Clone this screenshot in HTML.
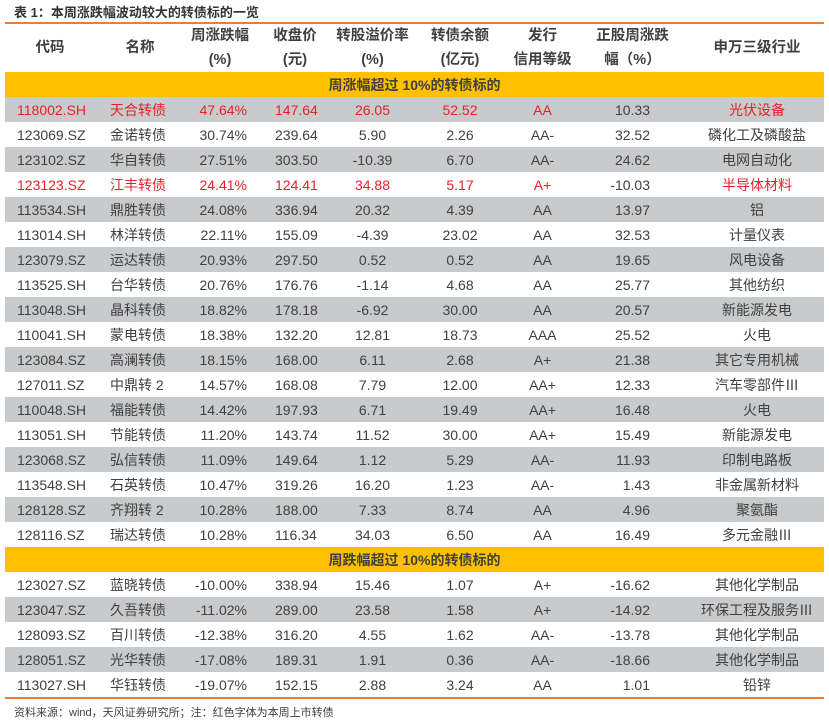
<!DOCTYPE html>
<html><head><meta charset="utf-8"><style>
body{margin:0;width:829px;height:719px;background:#fff;font-family:"Liberation Sans","Noto Sans CJK SC",sans-serif;color:#404040;position:relative;overflow:hidden}
.title{position:absolute;left:14px;top:2px;font-size:13px;font-weight:bold;color:#333}
table{position:absolute;left:5px;top:22px;width:819px;border-collapse:collapse;table-layout:fixed;font-size:14px}
td{padding:0;height:25px;white-space:nowrap;overflow:visible}
thead td{font-weight:bold;text-align:center;vertical-align:middle;color:#404040;line-height:24px;height:48px;font-size:14.5px}
thead tr{border-top:2px solid #ed7d31}
.b td{background:#ffc000;font-weight:bold;color:#404040;text-align:center;height:25px}
.g td{background:#c9cacc}
.r td{color:#e8202a}
td:nth-child(1){text-align:left;padding-left:12px}
td:nth-child(2){text-align:left;padding-left:15px}
td:nth-child(3){text-align:right;padding-right:8px}
td:nth-child(4){text-align:left;padding-left:20px}
td:nth-child(5),td:nth-child(6),td:nth-child(7),td:nth-child(9){text-align:center}
td:nth-child(8){text-align:right;padding-right:40px}
thead td,.b td{padding:0!important;text-align:center!important}
tbody.last tr:last-child{border-bottom:2px solid #ed7d31}
.foot{position:absolute;left:14px;top:704px;font-size:11px;color:#404040}
</style></head><body>
<div class="title">表 1：本周涨跌幅波动较大的转债标的一览</div>
<table>
<colgroup><col style="width:90px"><col style="width:90px"><col style="width:70px"><col style="width:80px"><col style="width:75px"><col style="width:100px"><col style="width:65px"><col style="width:115px"><col style="width:134px"></colgroup>
<thead><tr><td>代码</td><td>名称</td><td>周涨跌幅<br>(%)</td><td>收盘价<br>(元)</td><td>转股溢价率<br>(%)</td><td>转债余额<br>(亿元)</td><td>发行<br>信用等级</td><td>正股周涨跌<br>幅（%）</td><td>申万三级行业</td></tr></thead>
<tbody>
<tr class="b"><td colspan="9">周涨幅超过 10%的转债标的</td></tr>
<tr class="g r"><td>118002.SH</td><td>天合转债</td><td>47.64%</td><td>147.64</td><td>26.05</td><td>52.52</td><td>AA</td><td style="color:#404040">10.33</td><td>光伏设备</td></tr>
<tr><td>123069.SZ</td><td>金诺转债</td><td>30.74%</td><td>239.64</td><td>5.90</td><td>2.26</td><td>AA-</td><td>32.52</td><td>磷化工及磷酸盐</td></tr>
<tr class="g"><td>123102.SZ</td><td>华自转债</td><td>27.51%</td><td>303.50</td><td>-10.39</td><td>6.70</td><td>AA-</td><td>24.62</td><td>电网自动化</td></tr>
<tr class="r"><td>123123.SZ</td><td>江丰转债</td><td>24.41%</td><td>124.41</td><td>34.88</td><td>5.17</td><td>A+</td><td style="color:#404040">-10.03</td><td>半导体材料</td></tr>
<tr class="g"><td>113534.SH</td><td>鼎胜转债</td><td>24.08%</td><td>336.94</td><td>20.32</td><td>4.39</td><td>AA</td><td>13.97</td><td>铝</td></tr>
<tr><td>113014.SH</td><td>林洋转债</td><td>22.11%</td><td>155.09</td><td>-4.39</td><td>23.02</td><td>AA</td><td>32.53</td><td>计量仪表</td></tr>
<tr class="g"><td>123079.SZ</td><td>运达转债</td><td>20.93%</td><td>297.50</td><td>0.52</td><td>0.52</td><td>AA</td><td>19.65</td><td>风电设备</td></tr>
<tr><td>113525.SH</td><td>台华转债</td><td>20.76%</td><td>176.76</td><td>-1.14</td><td>4.68</td><td>AA</td><td>25.77</td><td>其他纺织</td></tr>
<tr class="g"><td>113048.SH</td><td>晶科转债</td><td>18.82%</td><td>178.18</td><td>-6.92</td><td>30.00</td><td>AA</td><td>20.57</td><td>新能源发电</td></tr>
<tr><td>110041.SH</td><td>蒙电转债</td><td>18.38%</td><td>132.20</td><td>12.81</td><td>18.73</td><td>AAA</td><td>25.52</td><td>火电</td></tr>
<tr class="g"><td>123084.SZ</td><td>高澜转债</td><td>18.15%</td><td>168.00</td><td>6.11</td><td>2.68</td><td>A+</td><td>21.38</td><td>其它专用机械</td></tr>
<tr><td>127011.SZ</td><td>中鼎转 2</td><td>14.57%</td><td>168.08</td><td>7.79</td><td>12.00</td><td>AA+</td><td>12.33</td><td>汽车零部件Ⅲ</td></tr>
<tr class="g"><td>110048.SH</td><td>福能转债</td><td>14.42%</td><td>197.93</td><td>6.71</td><td>19.49</td><td>AA+</td><td>16.48</td><td>火电</td></tr>
<tr><td>113051.SH</td><td>节能转债</td><td>11.20%</td><td>143.74</td><td>11.52</td><td>30.00</td><td>AA+</td><td>15.49</td><td>新能源发电</td></tr>
<tr class="g"><td>123068.SZ</td><td>弘信转债</td><td>11.09%</td><td>149.64</td><td>1.12</td><td>5.29</td><td>AA-</td><td>11.93</td><td>印制电路板</td></tr>
<tr><td>113548.SH</td><td>石英转债</td><td>10.47%</td><td>319.26</td><td>16.20</td><td>1.23</td><td>AA-</td><td>1.43</td><td>非金属新材料</td></tr>
<tr class="g"><td>128128.SZ</td><td>齐翔转 2</td><td>10.28%</td><td>188.00</td><td>7.33</td><td>8.74</td><td>AA</td><td>4.96</td><td>聚氨酯</td></tr>
<tr><td>128116.SZ</td><td>瑞达转债</td><td>10.28%</td><td>116.34</td><td>34.03</td><td>6.50</td><td>AA</td><td>16.49</td><td>多元金融Ⅲ</td></tr>
</tbody>
<tbody class="last">
<tr class="b"><td colspan="9">周跌幅超过 10%的转债标的</td></tr>
<tr><td>123027.SZ</td><td>蓝晓转债</td><td>-10.00%</td><td>338.94</td><td>15.46</td><td>1.07</td><td>A+</td><td>-16.62</td><td>其他化学制品</td></tr>
<tr class="g"><td>123047.SZ</td><td>久吾转债</td><td>-11.02%</td><td>289.00</td><td>23.58</td><td>1.58</td><td>A+</td><td>-14.92</td><td>环保工程及服务Ⅲ</td></tr>
<tr><td>128093.SZ</td><td>百川转债</td><td>-12.38%</td><td>316.20</td><td>4.55</td><td>1.62</td><td>AA-</td><td>-13.78</td><td>其他化学制品</td></tr>
<tr class="g"><td>128051.SZ</td><td>光华转债</td><td>-17.08%</td><td>189.31</td><td>1.91</td><td>0.36</td><td>AA-</td><td>-18.66</td><td>其他化学制品</td></tr>
<tr><td>113027.SH</td><td>华钰转债</td><td>-19.07%</td><td>152.15</td><td>2.88</td><td>3.24</td><td>AA</td><td>1.01</td><td>铅锌</td></tr>
</tbody>
</table>
<div class="foot">资料来源：wind，天风证券研究所；注：红色字体为本周上市转债</div>
</body></html>
